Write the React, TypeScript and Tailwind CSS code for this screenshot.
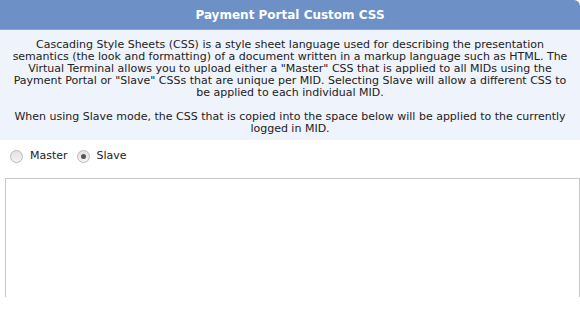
import { useState } from 'react';

const App = () => {
  const [mode, setMode] = useState<'master' | 'slave'>('slave');

  const font = { fontFamily: 'Verdana, "DejaVu Sans", sans-serif' };

  return (
    <div className="w-[580px] h-[327px] bg-white overflow-hidden text-[#222]" style={font}>
      {/* Header */}
      <div className="h-[30px] bg-[#6d91c6] rounded-tr-[6px] flex items-center justify-center border-b border-[#8aa7d2]">
        <h2 className="text-white font-bold text-[12px] leading-none">Payment Portal Custom CSS</h2>
      </div>

      {/* Description */}
      <div className="bg-[#eff3fb] pt-[9px] pb-[5px] px-[4px] text-center text-[11px] leading-[12px]">
        <p>
          Cascading Style Sheets (CSS) is a style sheet language used for describing the presentation
          <br />
          semantics (the look and formatting) of a document written in a markup language such as HTML. The
          <br />
          Virtual Terminal allows you to upload either a "Master" CSS that is applied to all MIDs using the
          <br />
          Payment Portal or "Slave" CSSs that are unique per MID. Selecting Slave will allow a different CSS to
          <br />
          be applied to each individual MID.
        </p>
        <p className="mt-[12px]">
          When using Slave mode, the CSS that is copied into the space below will be applied to the currently
          <br />
          logged in MID.
        </p>
      </div>

      {/* Mode radios */}
      <div className="flex items-center h-[31px] pl-[10px] pt-[2px] text-[11px]">
        <label className="flex items-center cursor-pointer" onClick={() => setMode('master')}>
          <span className="w-[13px] h-[13px] rounded-full border border-[#b9b9b9] bg-gradient-to-b from-[#e2e2e2] to-[#f4f4f4] flex items-center justify-center">
            {mode === 'master' && <span className="w-[5px] h-[5px] rounded-full bg-[#555]" />}
          </span>
          <span className="ml-[7px]">Master</span>
        </label>
        <label className="flex items-center cursor-pointer ml-[9px]" onClick={() => setMode('slave')}>
          <span className="w-[13px] h-[13px] rounded-full border border-[#b9b9b9] bg-gradient-to-b from-[#e2e2e2] to-[#f4f4f4] flex items-center justify-center">
            {mode === 'slave' && <span className="w-[5px] h-[5px] rounded-full bg-[#555]" />}
          </span>
          <span className="ml-[7px]">Slave</span>
        </label>
      </div>

      {/* CSS input */}
      <div className="pl-[5px] pt-[7px] h-[126px] overflow-hidden">
        <textarea className="w-[575px] h-[200px] border border-[#c8c8c8] bg-white resize-none outline-none p-1 text-[11px]" />
      </div>
    </div>
  );
};

export default App;
